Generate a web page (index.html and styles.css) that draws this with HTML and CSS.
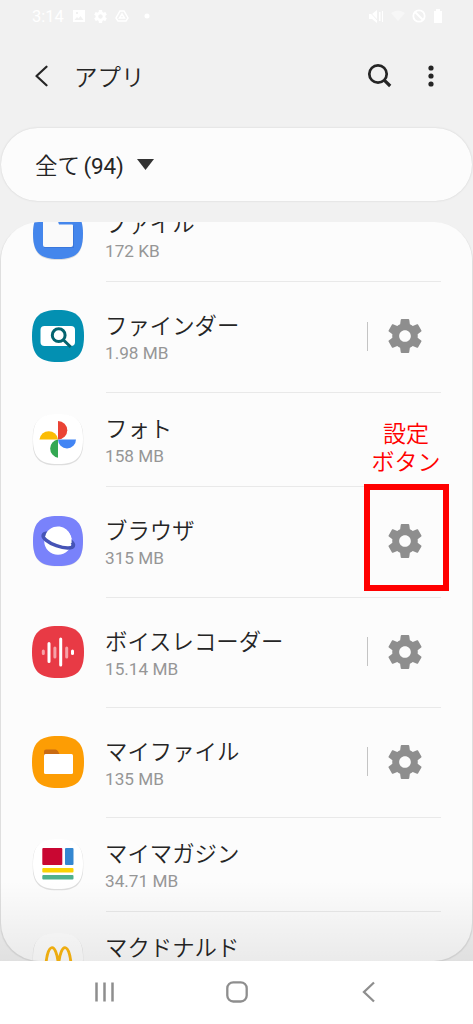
FILE: index.html
```html
<!DOCTYPE html>
<html lang="ja">
<head>
<meta charset="utf-8">
<title>アプリ</title>
<link rel="stylesheet" href="styles.css">
</head>
<body>
<svg class="defs" width="0" height="0">
  <symbol id="gear" viewBox="2.4 2.4 19.2 19.2"><path d="M19.140 12.940c.04-.3.06-.61.06-.94 0-.32-.02-.64-.07-.94l2.030-1.580c.18-.14.23-.41.12-.61l-1.920-3.320c-.12-.22-.37-.29-.59-.22l-2.390.96c-.5-.38-1.030-.7-1.620-.94l-.36-2.540c-.04-.24-.24-.41-.48-.41h-3.840c-.24 0-.43.17-.47.41l-.36 2.540c-.59.24-1.130.57-1.620.94l-2.390-.96c-.22-.08-.47 0-.59.22L2.740 8.870c-.12.21-.08.47.12.61l2.030 1.580c-.05.3-.09.63-.09.94s.02.64.07.94l-2.030 1.580c-.18.14-.23.41-.12.61l1.920 3.320c.12.22.37.29.59.22l2.390-.96c.5.38 1.030.7 1.620.94l.36 2.540c.05.24.24.41.48.41h3.840c.24 0 .44-.17.47-.41l.36-2.540c.59-.24 1.130-.56 1.620-.94l2.390.96c.22.08.47 0 .59-.22l1.920-3.320c.12-.22.07-.47-.12-.61l-2.010-1.580zM12 15.300c-1.820 0-3.300-1.480-3.300-3.300s1.480-3.300 3.300-3.300 3.300 1.480 3.300 3.300-1.480 3.300-3.300 3.300z"/></symbol>
  <symbol id="squircle" viewBox="0 0 52 52"><path d="M26 0C45 0 52 7 52 26S45 52 26 52 0 45 0 26 7 0 26 0z"/></symbol>
</svg>
<div class="phone">
  <div class="status">
    <div class="status-left">
      <span class="time">3:14</span>
      <svg width="14" height="14" viewBox="0 0 14 14"><path fill="#fff" fill-rule="evenodd" d="M1 1h12v12H1zM2.500 11h9L8.500 7l-2 2.500L5 8zM4 3v2h2V3z"/></svg>
      <svg width="13" height="13" fill="#fff"><use href="#gear"/></svg>
      <svg width="14" height="14" viewBox="0 0 14 14" fill="none" stroke="#fff" stroke-width="1.500"><path d="M5 2h4l4 7-2 3H3L1 9zM7 5l2.500 4h-5z"/></svg>
      <svg class="dot" width="6" height="6"><circle cx="3" cy="3" r="2.500" fill="#fff"/></svg>
    </div>
    <div class="status-right">
      <svg width="17" height="15" viewBox="0 0 17 15" fill="#fff"><path d="M2 5h3l5-4v13l-5-4H2zM12 3h1.500v9H12zM15 2h1v11h-1z"/><path d="M1 1l11 12" stroke="#f1f1f1"/></svg>
      <svg width="14" height="14" viewBox="0 0 14 14" fill="#f7f7f7"><path d="M0 4q7-5 14 0L7 12z"/></svg>
      <svg width="14" height="14" viewBox="0 0 14 14" fill="none" stroke="#fff" stroke-width="1.800"><circle cx="7" cy="7" r="5.700"/><path d="M3 3l8 8"/></svg>
      <svg width="10" height="14" viewBox="0 0 10 14" fill="#fff"><path d="M3 0h4v2h2v12H1V2h2z"/></svg>
    </div>
  </div>
  <header class="bar">
    <svg class="back" width="14" height="24" viewBox="0 0 14 24" fill="none" stroke="#252525" stroke-width="2.200" stroke-linecap="round" stroke-linejoin="round"><path d="M11.500 2.700L1.500 12l10 9.300"/></svg>
    <h1>アプリ</h1>
    <svg width="26" height="26" viewBox="0 0 26 26" fill="none" stroke="#252525"><circle cx="11" cy="11" r="8.700" stroke-width="2.700"/><path d="M17.200 17.200l6 5.800" stroke-width="3.200"/></svg>
    <svg class="more" width="8" height="24" viewBox="0 0 8 24" fill="#252525"><circle cx="4" cy="4" r="2.600"/><circle cx="4" cy="12" r="2.600"/><circle cx="4" cy="20" r="2.600"/></svg>
  </header>
  <div class="filter"><span>全て <span class="count">(94)</span></span><svg width="17" height="11" viewBox="0 0 17 11"><path d="M0 0h17L8.500 11z" fill="#333"/></svg></div>
  <main class="list">
    <div class="row first">
      <svg class="icon" viewBox="0 0 54 54"><use class="shade" href="#squircle" x="2" y="3" width="50" height="50"/><use href="#squircle" x="2" y="2" width="50" height="50" fill="#4486ec"/><path d="M13 12h12l4 7h14v22H13z" fill="#3977dc"/><path d="M12 8h13l3 9.500h13a1 1 0 0 1 1 1V38a2 2 0 0 1-2 2H14a2 2 0 0 1-2-2z" fill="#fafafa"/></svg>
      <div class="text"><div class="name">ファイル</div><div class="size">172 KB</div></div>
    </div>
    <div class="row tall">
      <svg class="icon" viewBox="0 0 54 54"><use href="#squircle" x="1" y="1" width="52" height="52" fill="#0390b2"/><rect x="9.500" y="17" width="34.500" height="20" rx="4" fill="#fff"/><g fill="none" stroke="#04646f"><circle cx="27.700" cy="26.200" r="6.400" stroke-width="3"/><path d="M32.500 31l7.200 7" stroke-width="3"/></g></svg>
      <div class="text"><div class="name">ファインダー</div><div class="size">1.98 MB</div></div>
      <i class="sep"></i><svg class="gear"><use href="#gear"/></svg>
    </div>
    <div class="row short">
      <svg class="icon" viewBox="0 0 54 54"><use class="shade" href="#squircle" x="1.500" y="2.500" width="51" height="51"/><use href="#squircle" x="2" y="2" width="50" height="50" fill="#fff"/><path d="M27 9a9.300 9.300 0 0 1 0 18.600z" fill="#ea4335"/><path d="M8.500 27.500a9.300 9.300 0 0 1 18.500 0z" fill="#fbbc04"/><path d="M27 27.500h18a9 9 0 0 1-18 0z" fill="#4285f4"/><path d="M27 27.500v18.200a9.200 9.200 0 0 1 0-18.200z" fill="#34a853"/></svg>
      <div class="text"><div class="name">フォト</div><div class="size">158 MB</div></div>
    </div>
    <div class="row tall">
      <svg class="icon" viewBox="0 0 54 54"><use class="shade" href="#squircle" x="2" y="2.500" width="50" height="50"/><use href="#squircle" x="2" y="2" width="50" height="50" fill="#7982fb"/><circle cx="27" cy="27" r="13.800" fill="#fff"/><ellipse cx="27.300" cy="26.500" rx="16" ry="5.500" transform="rotate(20 27.300 26.500)" fill="none" stroke="#4654b6" stroke-width="3.600"/><path d="M14.600 21C18 10.500 34 9 39 20.500q2 4 1.600 8.500Q33 33 14.600 21z" fill="#fff"/></svg>
      <div class="text"><div class="name">ブラウザ</div><div class="size">315 MB</div></div>
      <svg class="gear"><use href="#gear"/></svg>
    </div>
    <div class="row">
      <svg class="icon" viewBox="0 0 54 54"><use href="#squircle" x="1" y="1" width="52" height="52" fill="#e83a45"/><g stroke="#fff" stroke-width="3" stroke-linecap="round"><path d="M18 18.500v18M29.700 14v26"/><path d="M41.500 26v2.500"/><path d="M12.300 26v2.500M23.900 23v9M35.700 23v9" stroke="#f6a3a8"/></g></svg>
      <div class="text"><div class="name">ボイスレコーダー</div><div class="size">15.14 MB</div></div>
      <i class="sep"></i><svg class="gear"><use href="#gear"/></svg>
    </div>
    <div class="row">
      <svg class="icon" viewBox="0 0 54 54"><use href="#squircle" x="1" y="1" width="52" height="52" fill="#fd9d04"/><path d="M13 22v-5.500q0-2 2-2h9.500q1.500 0 2.500 1.800l1.500 2.700V22z" fill="#c96b12"/><rect x="13" y="19" width="29" height="20" rx="1.500" fill="#fff"/></svg>
      <div class="text"><div class="name">マイファイル</div><div class="size">135 MB</div></div>
      <i class="sep"></i><svg class="gear"><use href="#gear"/></svg>
    </div>
    <div class="row short">
      <svg class="icon" viewBox="0 0 54 54"><use class="shade" href="#squircle" x="1.500" y="2.500" width="51" height="51"/><use href="#squircle" x="2" y="2" width="50" height="50" fill="#fff"/><rect x="11.300" y="11" width="20" height="17" rx="1" fill="#c90732"/><rect x="34" y="11" width="8.500" height="17" rx="1" fill="#3487d1"/><rect x="11.300" y="31" width="31.200" height="4.500" rx="1" fill="#f9d304"/><rect x="11.300" y="38" width="31.200" height="4.500" rx="1" fill="#4fb18e"/></svg>
      <div class="text"><div class="name">マイマガジン</div><div class="size">34.71 MB</div></div>
    </div>
    <div class="row short">
      <svg class="icon" viewBox="0 0 54 54"><use class="shade" href="#squircle" x="1.500" y="2.500" width="51" height="51"/><use href="#squircle" x="2" y="2" width="50" height="50" fill="#fff"/><path d="M14.500 42C15 10 25.500 9 27.500 35 29.500 9 40 10 40.500 42" fill="none" stroke="#fdb812" stroke-width="2.800"/></svg>
      <div class="text"><div class="name">マクドナルド</div><div class="size"></div></div>
    </div>
  </main>
  <nav class="nav">
    <svg width="20" height="20" viewBox="0 0 20 20" stroke="#8e8e8e" stroke-width="2.500"><path d="M2.500.5v19M10.500.5v19M18.500.5v19"/></svg>
    <svg class="home" width="22" height="22" viewBox="0 0 22 22"><rect x="1.300" y="1.300" width="19.400" height="19.200" rx="6" fill="none" stroke="#8e8e8e" stroke-width="2.300"/></svg>
    <svg width="14" height="22" viewBox="0 0 14 22" fill="none" stroke="#8e8e8e" stroke-width="2.300"><path d="M12 1.500L2 11l10 9.500"/></svg>
  </nav>
  <div class="fade"></div>
  <div class="note">設定<br>ボタン</div>
  <div class="highlight"></div>
</div>
</body>
</html>
```

FILE: styles.css
```css
* { box-sizing: border-box; }
body { margin: 0; background: #f1f1f1; }
svg { display: block; flex: none; }
.defs { position: absolute; }
.phone {
  position: relative;
  width: 473px;
  height: 1024px;
  overflow: hidden;
  display: flex;
  flex-direction: column;
  background: #f1f1f1;
  color: #252525;
  font-family: Roboto, "Noto Sans CJK JP", sans-serif;
}
.status {
  height: 32px;
  padding: 0 30px 0 32px;
  display: flex;
  justify-content: space-between;
  align-items: center;
  color: #fff;
}
.status-left { display: flex; align-items: center; gap: 8px; }
.status-right { display: flex; align-items: center; gap: 7px; }
.time { font-size: 16.5px; }
.dot { margin-left: 7px; }
.bar {
  height: 96px;
  padding: 0 38px 8px 35px;
  display: flex;
  align-items: center;
}
.bar h1 {
  flex: 1;
  margin: 0 0 0 25px;
  font: 350 23.500px/34px "Noto Sans CJK JP", sans-serif;
}
.more { margin-left: 34px; }
.filter {
  height: 73px;
  margin: 0 1px;
  padding: 0 34px;
  display: flex;
  align-items: center;
  gap: 13px;
  border-radius: 37px;
  background: #fcfcfc;
  box-shadow: 0 0 2px #ccc;
  font-size: 22.5px;
  font-weight: 350;
  word-spacing: -2px;
}
.filter > span { margin-top: -2px; }
.count { font-weight: 400; letter-spacing: -.2px; }
.list {
  height: 739px;
  margin: 21px 1px 0;
  overflow: hidden;
  border-radius: 38px;
  background: #fcfcfc;
  box-shadow: 1px 1px 1px #ddd, -1px 1px 1px #ddd;
}
.row {
  position: relative;
  height: 110px;
  padding: 0 50px 2px 30px;
  display: flex;
  align-items: center;
}
.row::after {
  content: "";
  position: absolute;
  left: 105px;
  right: 31px;
  bottom: 0;
  height: 1px;
  background: #e9e9e9;
}
.row.first { height: 95px; margin-top: -35px; }
.row.tall { height: 110.5px; }
.row.short { height: 94.5px; }
.icon { width: 54px; height: 54px; }
.shade { fill: #dedede; }
.text { flex: 1; margin: 3px 0 0 20px; }
.name {
  padding-bottom: 4px;
  font: 350 22.4px/27px "Noto Sans CJK JP", sans-serif;
  white-space: nowrap;
}
.size { height: 22px; font-size: 17.2px; line-height: 22px; color: #969696; }
.sep { width: 1px; height: 29px; margin-right: 20px; background: #c4c4c4; }
.gear { width: 34px; height: 34px; fill: #8e8e8e; }
.nav {
  height: 63px;
  padding: 0 97px 1px 94px;
  display: flex;
  align-items: center;
  justify-content: space-between;
  background: #fff;
}
.home { margin-right: 3px; }
.fade {
  position: absolute;
  left: 0;
  right: 0;
  top: 881px;
  height: 80px;
  background: linear-gradient(rgba(0, 0, 0, 0), rgba(0, 0, 0, .07));
}
.note {
  position: absolute;
  left: 356px;
  top: 418px;
  width: 100px;
  text-align: center;
  color: #f00;
  font: 350 23px/28px "Noto Sans CJK JP", sans-serif;
}
.highlight {
  position: absolute;
  left: 364px;
  top: 484px;
  width: 85px;
  height: 107px;
  border: 6px solid #f00;
}
```
